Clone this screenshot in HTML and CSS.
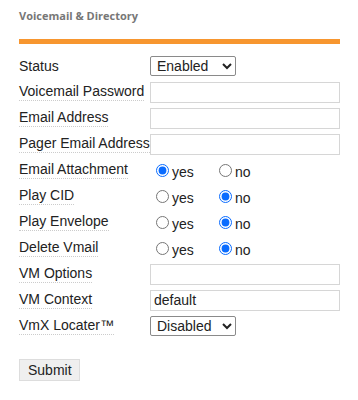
FILE: index.html
```html
<html>
    <head>
        <link rel="stylesheet" href="styles.css">
    </head>
    <body>
        <div class="page">
            <h2 class="title">Voicemail &amp; Directory</h2>
            <div class="bar"></div>
            <form class="form" action="#" method="POST">
                <div class="row">
                    <span class="label plain">Status</span>
                    <select class="select" name="status">
                        <option>Enabled</option>
                        <option>Disabled</option>
                    </select>
                </div>
                <div class="row">
                    <span class="label">Voicemail Password</span>
                    <input class="text" type="text" name="password">
                </div>
                <div class="row">
                    <span class="label">Email Address</span>
                    <input class="text" type="text" name="email">
                </div>
                <div class="row">
                    <span class="label">Pager Email Address</span>
                    <input class="text" type="text" name="pager">
                </div>
                <div class="row">
                    <span class="label">Email Attachment</span>
                    <div class="radios">
                        <label class="choice"><input type="radio" name="attach" checked> yes</label>
                        <label class="choice"><input type="radio" name="attach"> no</label>
                    </div>
                </div>
                <div class="row">
                    <span class="label">Play CID</span>
                    <div class="radios">
                        <label class="choice"><input type="radio" name="cid"> yes</label>
                        <label class="choice"><input type="radio" name="cid" checked> no</label>
                    </div>
                </div>
                <div class="row">
                    <span class="label">Play Envelope</span>
                    <div class="radios">
                        <label class="choice"><input type="radio" name="envelope"> yes</label>
                        <label class="choice"><input type="radio" name="envelope" checked> no</label>
                    </div>
                </div>
                <div class="row">
                    <span class="label">Delete Vmail</span>
                    <div class="radios">
                        <label class="choice"><input type="radio" name="delete"> yes</label>
                        <label class="choice"><input type="radio" name="delete" checked> no</label>
                    </div>
                </div>
                <div class="row">
                    <span class="label">VM Options</span>
                    <input class="text" type="text" name="options">
                </div>
                <div class="row">
                    <span class="label">VM Context</span>
                    <input class="text" type="text" name="context" value="default">
                </div>
                <div class="row">
                    <span class="label">VmX Locater™</span>
                    <select class="select" name="vmx">
                        <option>Disabled</option>
                        <option>Enabled</option>
                    </select>
                </div>
                <div class="actions">
                    <button class="submit" type="button">Submit</button>
                </div>
            </form>
        </div>
    </body>
</html>
```

FILE: styles.css
```css
* {
    margin: 0;
    padding: 0;
    box-sizing: border-box;
}

body {
    background: #fff;
    font-family: "Liberation Sans", Arial, sans-serif;
    font-size: 14px;
    color: #222;
}

.page {
    padding: 9px 18px 0 19px;
}

.title {
    font-family: "Open Sans", sans-serif;
    font-size: 11px;
    font-weight: bold;
    color: #777;
    line-height: 13px;
}

.bar {
    height: 5px;
    background: #f7962f;
    margin-top: 17px;
    margin-bottom: 9px;
}

.row {
    display: grid;
    grid-template-columns: 131px 190px;
    align-items: center;
    height: 26px;
}

.label {
    justify-self: start;
    line-height: 17px;
    border-bottom: 1px dotted #ccc;
}

.label.plain {
    border-bottom: none;
}

.text {
    width: 190px;
    height: 21px;
    border: 1px solid #d6d6d6;
    padding: 0 3px;
    font-family: "Liberation Sans", Arial, sans-serif;
    font-size: 14px;
    color: #222;
}

.select {
    justify-self: start;
    width: 86px;
    height: 20px;
    border: 1px solid #8a8a8a;
    border-radius: 2px;
    background: #fff;
    font-family: "Liberation Sans", Arial, sans-serif;
    font-size: 14px;
    color: #222;
    padding: 0 2px;
}

.radios {
    display: flex;
    padding-top: 3px;
}

.choice {
    display: flex;
    align-items: center;
    width: 63px;
}

.choice input {
    width: 13px;
    height: 13px;
    margin: 0 3px 3px 6px;
    accent-color: #0a6cff;
}

.actions {
    margin-top: 20px;
}

.submit {
    font-family: "Liberation Sans", Arial, sans-serif;
    font-size: 14px;
    color: #222;
    background: #efefef;
    border: 1px solid #ddd;
    padding: 2px 8px;
    height: 22px;
    width: 61px;
}
```
